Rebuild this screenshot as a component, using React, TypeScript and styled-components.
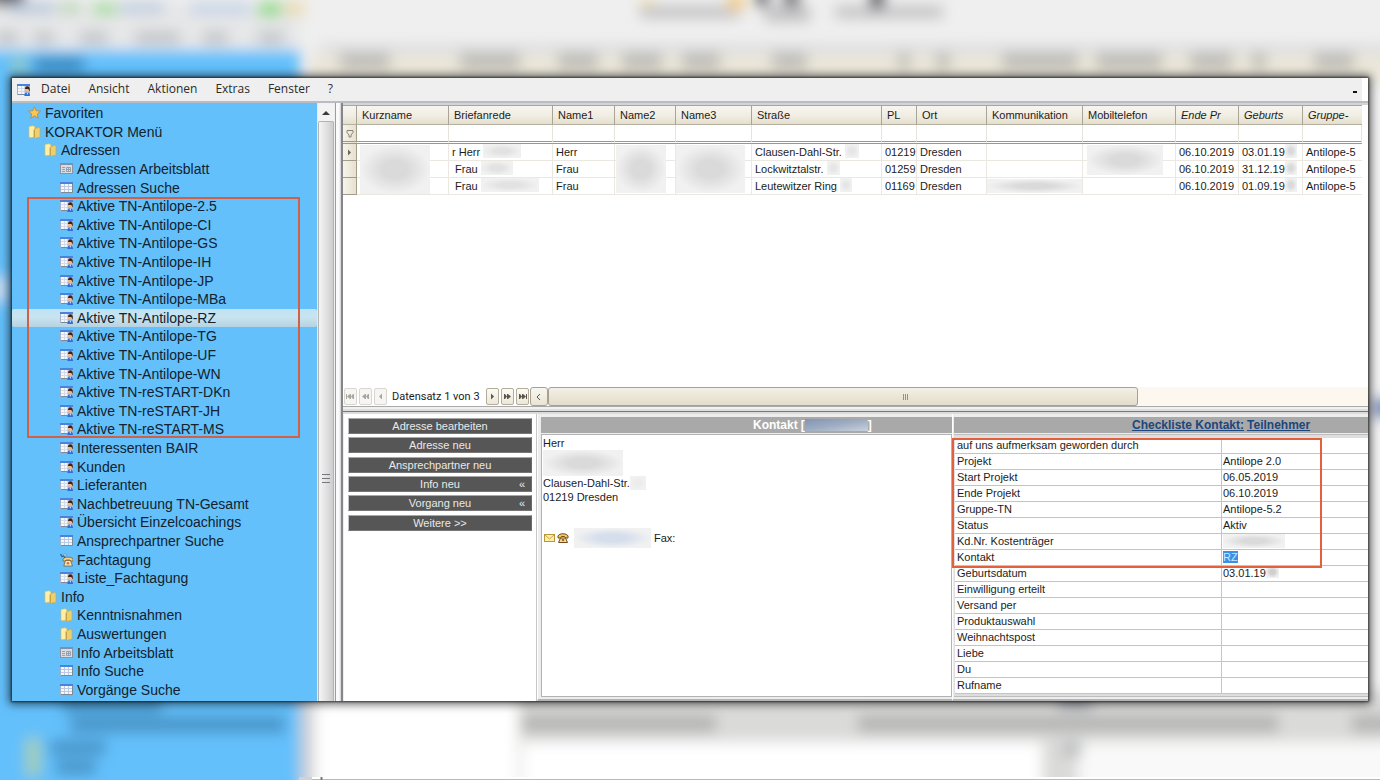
import React from "react";
import styled, { createGlobalStyle, css } from "styled-components";

const sans = `"Liberation Sans", Arial, sans-serif`;
const ui = `"Open Sans", "Noto Sans", sans-serif`;

const Global = createGlobalStyle`
  *, *::before, *::after { box-sizing: border-box; }
  body { margin: 0; background: #efefef; color: #1c1c1c; font-family: ${sans}; font-size: 11px; }
  button, input { font: inherit; color: inherit; margin: 0; padding: 0; border: 0; background: none; }
  table { border-collapse: separate; border-spacing: 0; }
  th { font-weight: normal; text-align: left; }
  ul { list-style: none; margin: 0; padding: 0; }
`;

/* ---------- page and window frame ---------- */

const Page = styled.div`
  position: relative;
  display: flex;
  min-height: 100vh;
  padding: 78px 12px 79px;
  overflow: hidden;
`;

const BackdropArt = styled.svg`
  position: absolute;
  inset: 0;
  width: 100%;
  height: 100%;
`;

const Window = styled.div`
  position: relative;
  flex: 1;
  min-width: 0;
  display: flex;
  flex-direction: column;
  background: #efefef;
  box-shadow: 0 0 2px 1px rgba(0, 0, 0, 0.6), 0 0 9px 3px rgba(0, 0, 0, 0.6);
`;

const MenuBar = styled.nav`
  display: flex;
  align-items: center;
  height: 23px;
  padding: 0 5px;
  font-family: ${ui};
  font-size: 12px;
  line-height: 20px;
  color: #2b2b2b;
  border-right: 6px solid #fff;
`;

const MenuItem = styled.button`
  height: 22px;
  padding-bottom: 2px;
  margin-left: 18px;
  &:first-of-type { margin-left: 11px; }
`;

const Overflow = styled.span`
  width: 4px;
  height: 2px;
  margin: 4px 0 0 auto;
  background: #111;
`;

const Workspace = styled.div`
  flex: 1;
  display: flex;
  min-height: 0;
  border-top: 2px solid #b9bcc0;
`;

/* ---------- tree ---------- */

const Tree = styled.ul`
  position: relative;
  flex: none;
  width: 305px;
  display: grid;
  grid-template-rows: repeat(32, minmax(18px, 1fr));
  padding: 1px 0 2px;
  background: #63c0fb;
  font-size: 14px;
`;

const TreeRow = styled.li<{ $level: number; $active?: boolean }>`
  display: flex;
  padding-left: ${(p) => 16 + p.$level * 16}px;
  ${(p) =>
    p.$active &&
    css`
      background: linear-gradient(#bfe2f4, #c9e4f0 45%, #b5d3e3);
      border-radius: 2px;
    `}
`;

const TreeLink = styled.a`
  display: flex;
  align-items: center;
  gap: 4px;
  color: #12222e;
  text-decoration: none;
  white-space: nowrap;
  line-height: 18px;
`;

const TreeMark = styled.li`
  position: absolute;
  grid-row: 6 / 19;
  inset: 0 17px 1px 15px;
  border: 2px solid #cf6148;
  pointer-events: none;
`;

const VScroll = styled.div`
  flex: none;
  width: 18px;
  display: flex;
  flex-direction: column;
  padding: 1px 1px 0;
  background: linear-gradient(90deg, #d8ecf8, #f2f2f2 20%, #efefef);
`;

const VScrollUp = styled.button`
  height: 17px;
  display: grid;
  place-items: center;
  background: #f3f3f3;
`;

const VScrollThumb = styled.div`
  flex: 1;
  display: grid;
  place-items: center;
  padding-top: 134px;
  border: 1px solid #b4b4b4;
  border-bottom: 0;
  border-radius: 2px 2px 0 0;
  background: linear-gradient(90deg, #f5f5f5, #e4e4e4 45%, #cdcdd0);
`;

const Divider = styled.div`
  flex: none;
  width: 8px;
  border-left: 1px solid #5fb0e0;
  border-right: 2px solid #85858a;
  background: linear-gradient(90deg, #fafafa 60%, #cfcfd2);
`;

/* ---------- address grid ---------- */

const Main = styled.main`
  flex: 1;
  min-width: 0;
  display: flex;
  flex-direction: column;
  background: #fff;
`;

const GridPane = styled.section`
  flex: 1;
  padding-right: 6px;
  border-top: 2px solid #d4d4d6;
  overflow: hidden;
`;

const AddressTable = styled.table`
  width: 100%;
  table-layout: fixed;
`;

const HeadCell = styled.th<{ $italic?: boolean }>`
  height: 20px;
  padding: 0 0 0 5px;
  white-space: nowrap;
  overflow: hidden;
  font-style: ${(p) => (p.$italic ? "italic" : "normal")};
  background: linear-gradient(#f7f5f0, #f0ede3 55%, #e4dfcd);
  border-right: 1px solid #a9a496;
  border-bottom: 1px solid #b6b0a0;
  border-top: 1px solid #a5a5a5;
  &:last-child { border-right: 0; }
`;

const FilterCell = styled.td`
  height: 19px;
  padding: 0;
  background: #fff;
  border-right: 1px solid #e6e3dc;
  border-bottom: 3px double #a89674;
`;

const FilterInput = styled.input`
  display: block;
  width: 100%;
  height: 15px;
  padding: 0 3px;
  outline: 0;
`;

const MarkerCell = styled.td<{ $tall?: boolean }>`
  height: ${(p) => (p.$tall ? 19 : 17)}px;
  padding: 0;
  line-height: 0;
  text-align: center;
  background: linear-gradient(90deg, #f6f3ea, #e6e1d0);
  border-right: 1px solid #a39c88;
  border-bottom: ${(p) => (p.$tall ? "3px double #a89674" : "1px solid #a39c88")};
`;

const Cell = styled.td`
  position: relative;
  height: 17px;
  padding: 0 0 0 3px;
  line-height: 16px;
  white-space: nowrap;
  border-right: 1px solid #ebe8e1;
  border-bottom: 1px solid #ebe8e1;
  &:last-child { border-right: 0; }
`;

/* Grey haze that hides personal data. */
const Haze = styled.span<{ $w: number; $h: number; $tone?: string }>`
  display: inline-block;
  vertical-align: top;
  width: ${(p) => p.$w}px;
  height: ${(p) => p.$h}px;
  background: radial-gradient(farthest-side, ${(p) => p.$tone ?? "#dadada"} 35%, #f1f1f1);
`;

const HazeOver = styled(Haze)<{ $x: number }>`
  position: absolute;
  z-index: 1;
  left: ${(p) => p.$x}px;
  top: 1px;
`;

/* ---------- record navigator ---------- */

const Navigator = styled.div`
  display: flex;
  align-items: stretch;
  height: 20px;
  border-bottom: 1px solid #a9a9a9;
`;

const NavGroup = styled.div`
  display: flex;
  align-items: center;
  gap: 2px;
  padding: 0 1px;
`;

const NavButton = styled.button`
  width: 13px;
  height: 17px;
  display: grid;
  place-items: center;
  color: #5d564a;
  border: 1px solid #b5ad9a;
  border-radius: 2px;
  background: linear-gradient(#fbfaf6, #ece7d9);
  &:disabled { color: #a9a7a2; border-color: #d8d6d0; background: #f6f5f2; }
`;

const NavText = styled.span`
  padding: 0 4px 0 3px;
  font-family: Roboto, sans-serif;
  line-height: 16px;
  white-space: nowrap;
`;

const ScrollLeft = styled.button`
  width: 18px;
  display: grid;
  place-items: center;
  color: #5d564a;
  border: 1px solid #a8a191;
  border-radius: 3px;
  background: linear-gradient(#f8f6f0, #e9e4d4);
`;

const HTrack = styled.div`
  flex: 1;
  background: #fcf8ef;
`;

const HThumb = styled.div`
  width: 72%;
  height: 19px;
  display: grid;
  place-items: center;
  padding-left: 126px;
  border: 1px solid #a8a191;
  border-radius: 3px;
  background: linear-gradient(#f3f0e8, #e9e4d3 60%, #e3decb);
`;

const Splitter = styled.div`
  height: 7px;
  border-bottom: 2px solid #dcdcdc;
  background: linear-gradient(#f1f1f1 0 2px, #dedede 2px 4px, #77777b 4px 5px);
`;

/* ---------- lower panels ---------- */

const Lower = styled.div`
  display: flex;
  background: #ededed;
`;

const ActionPanel = styled.section`
  flex: none;
  width: 193px;
  display: flex;
  flex-direction: column;
  gap: 4px;
  margin-left: 1px;
  padding: 4px 4px 0;
  background: #fff;
  border-right: 1px solid #c6c6c6;
`;

const ActionGroup = styled.div`
  display: flex;
  flex-direction: column;
  gap: 3px;
`;

const ActionButton = styled.button`
  position: relative;
  height: 16px;
  line-height: 14px;
  color: #e9e9e9;
  background: #565656;
  border: 1px solid;
  border-color: #a8a8a8 #6b6b6b #777 #c4c4c4;
`;

const More = styled.span`
  position: absolute;
  right: 6px;
  top: 0;
`;

const Panel = styled.section<{ $width?: number }>`
  flex: ${(p) => (p.$width ? `0 0 ${p.$width}px` : "1")};
  min-width: 0;
  display: flex;
  flex-direction: column;
  padding: 3px 0 0 ${(p) => (p.$width ? 3 : 1)}px;
  border-left: 1px solid #fff;
  border-bottom: 2px solid #b4b4b6;
`;

const PanelHead = styled.h2<{ $indent: number }>`
  display: flex;
  align-items: center;
  gap: 3px;
  height: 16px;
  margin: 0;
  padding-left: ${(p) => p.$indent}px;
  font-size: 12px;
  line-height: 16px;
  white-space: nowrap;
  color: #fff;
  background: #aaa9aa;
  a { color: #1c467c; }
`;

const NameTag = styled.span`
  display: flex;
  align-items: center;
`;

const NamePatch = styled.span`
  width: 63px;
  height: 12px;
  background: linear-gradient(170deg, #8294b6, #9fadc2 50%, #c8d2dc);
`;

const ContactCard = styled.address`
  flex: 1;
  margin: 1px 0 2px;
  padding: 1px;
  font-style: normal;
  line-height: 14px;
  background: #fff;
  border: 1px solid #b3b3b3;
`;

const CardLine = styled.div<{ $gap?: number }>`
  display: flex;
  align-items: center;
  column-gap: ${(p) => (p.$gap ? 3 : 0)}px;
  margin-top: ${(p) => p.$gap ?? 0}px;
`;

const Checklist = styled.div`
  position: relative;
  margin: 1px 0 2px;
  padding: 3px 0 2px 1px;
  background: #dedede;
  border-top: 1px solid #bdbdbd;
  border-bottom: 1px solid #bdbdbd;
`;

const CheckTable = styled.table`
  width: 100%;
  table-layout: fixed;
  background: #fff;
  th, td {
    height: 16px;
    padding: 0 0 0 2px;
    line-height: 15px;
    white-space: nowrap;
    border-bottom: 1px solid #c4c4c4;
  }
  th { width: 267px; border-right: 1px solid #c4c4c4; }
  td { padding-left: 1px; }
  mark { color: #cfe6ff; background: #3b92e4; }
`;

const ChecklistMark = styled.div`
  position: absolute;
  inset: 3px 46px 128px -2px;
  border: 2px solid #e4603c;
  pointer-events: none;
`;

/* ---------- icons ---------- */

type IconKind = "star" | "folder" | "sheet" | "table" | "contact" | "phone";

const Grid = ({ line = "#bccbe2" }: { line?: string }) => (
  <>
    <rect x=".5" y="1.500" width="12" height="10" fill="#f4f8fe" stroke="#a5b1c6" />
    <path d="M12.500 3v8.500H1" fill="none" stroke="#7d8898" />
    <rect x="0" y="1" width="13" height="2" fill="#4a83de" />
    <path d="M1 5.500h11M1 8.500h11M4.500 3v8M8.500 3v8" stroke={line} />
  </>
);

const Icon = ({ kind }: { kind: IconKind }) => (
  <svg width="13" height="14" viewBox="0 0 13 14" aria-hidden="true">
    {kind === "star" && (
      <path d="M6.500 .8l1.700 3.900 4.300.4-3.200 2.900 1 4.200-3.800-2.300-3.800 2.300 1-4.200L.5 5.100l4.300-.4z" fill="#fbc552" stroke="#b98535" strokeWidth=".8" />
    )}
    {kind === "folder" && (
      <>
        <path d="M1 1.500l4-.8 2 1.300V12l-5 .8-1-1z" fill="#ffefa6" stroke="#dcb858" strokeWidth=".6" />
        <path d="M6 4.200l4.500-2 1.500.8v9.200L7.200 13.200 6 12.500z" fill="#edcf6c" stroke="#c9a548" strokeWidth=".6" />
        <path d="M6.300 5v7.300" stroke="#b18f3c" strokeWidth=".8" />
      </>
    )}
    {kind === "table" && <Grid />}
    {kind === "sheet" && (
      <>
        <rect x=".5" y="1.500" width="12" height="10" fill="#d9dde3" stroke="#8b93a0" />
        <rect x="0" y="1" width="13" height="2" fill="#7d90ad" />
        <path d="M2 5.500h3M2 7.500h3M2 9.500h3M6.500 5.500h4v4h-4zM8.500 5v5M7 7.500h4" stroke="#979fab" fill="none" />
      </>
    )}
    {kind === "contact" && (
      <>
        <Grid line="#d3dcea" />
        <rect x="7.500" y="3" width="5.500" height="9" fill="#a9b8d2" />
        <circle cx="10.200" cy="6.800" r="2.200" fill="#f0b988" />
        <path d="M8 6c0-3.600 4.800-3.600 4.800 0v2.500l-1.500-2.500z" fill="#3c2418" />
        <path d="M7.300 13c0-5 5.700-5 5.700 0z" fill="#2f6fdd" />
        <path d="M9.500 9.500h1.500l-.7 2.500z" fill="#fff" />
      </>
    )}
    {kind === "phone" && (
      <>
        <path d="M.5 1l1.500 2.500L4 3l1 2" stroke="#2d5f86" strokeWidth="1.200" fill="none" />
        <circle cx="5" cy="2" r="1.200" fill="#e8f4ff" stroke="#3b7aa8" strokeWidth=".6" />
        <path d="M3 6c2-2.500 8-2.500 10 0v2h-2l-1-1H6L5 8H3z" fill="#f5d186" stroke="#7a5125" strokeWidth=".7" />
        <path d="M5.500 7.500h5L12.500 13H3.800z" fill="#fbe3ae" stroke="#7a5125" strokeWidth=".7" />
        <circle cx="8" cy="10.200" r="1.300" fill="#c8793c" />
      </>
    )}
  </svg>
);

const Arrow = ({ bars, count, flip }: { bars?: boolean; count: number; flip?: boolean }) => (
  <svg width="9" height="7" viewBox="0 0 9 7" aria-hidden="true">
    <g fill="currentColor" transform={flip ? "matrix(-1 0 0 1 9 0)" : undefined}>
      {count === 1 ? (
        <path d="M3 .5l3 3-3 3z" />
      ) : (
        <>
          <path d="M1 1h1l2 2.500L2 6H1zM4 1h1l3 2.500L5 6H4z" />
          {bars && <path d="M8 1h1v5H8z" />}
        </>
      )}
    </g>
  </svg>
);

const headerSmudges = [
  [340, 50], [460, 60], [558, 40], [622, 40], [682, 38], [772, 35], [898, 12],
  [936, 14], [1002, 76], [1096, 66], [1190, 42], [1252, 14], [1314, 40],
];

const Backdrop = () => (
  <BackdropArt viewBox="0 0 1380 780" preserveAspectRatio="none" aria-hidden="true">
    <defs>
      <filter id="soft" x="-10%" y="-10%" width="120%" height="120%">
        <feGaussianBlur stdDeviation="7" />
      </filter>
    </defs>
    <rect width="1380" height="780" fill="#efefef" />
    <g filter="url(#soft)">
      <rect x="-30" y="2" width="330" height="46" fill="#e6e7e8" />
      <g fill="#bdbfc3">
        <rect x="-10" y="-16" width="34" height="22" fill="#5c5c60" />
        <rect x="10" y="3" width="45" height="10" fill="#b2c2da" />
        <rect x="60" y="3" width="20" height="10" fill="#b5d4b0" />
        <rect x="93" y="3" width="24" height="12" fill="#a4dd9c" />
        <rect x="120" y="3" width="44" height="10" fill="#b9c9df" />
        <rect x="190" y="3" width="60" height="11" fill="#c4d3e8" />
        <rect x="258" y="2" width="24" height="15" fill="#94da8c" />
        <rect x="286" y="2" width="18" height="13" fill="#ead9a8" />
        <rect x="-4" y="32" width="22" height="11" />
        <rect x="34" y="32" width="20" height="11" />
        <rect x="80" y="32" width="28" height="11" />
        <rect x="135" y="32" width="45" height="11" />
        <rect x="203" y="32" width="25" height="11" />
        <rect x="258" y="32" width="26" height="11" />
      </g>
      <g fill="#c2c2c4">
        <rect x="640" y="6" width="100" height="12" />
        <rect x="640" y="-2" width="14" height="8" fill="#f6e3b0" />
        <rect x="728" y="-8" width="16" height="18" fill="#f3cf8a" />
        <rect x="756" y="-10" width="13" height="16" fill="#606064" />
        <rect x="784" y="-10" width="15" height="20" fill="#606064" />
        <rect x="765" y="6" width="45" height="16" />
        <rect x="835" y="6" width="108" height="12" />
        <rect x="870" y="-10" width="14" height="18" fill="#505054" />
      </g>
      <rect x="320" y="44" width="1080" height="10" fill="#dcdddf" />
      <rect x="310" y="55" width="1090" height="25" fill="#ebe6d8" />
      <g fill="#bfbdb6">
        {headerSmudges.map(([x, w]) => (
          <rect key={x} x={x} y="53" width={w} height="17" />
        ))}
      </g>
      <rect x="-30" y="50" width="330" height="780" fill="#63c0fb" />
      <rect x="12" y="56" width="14" height="20" fill="#8cc8c4" />
      <rect x="34" y="56" width="50" height="17" fill="#3b8dc4" />
      <ellipse cx="-1" cy="289" rx="8" ry="14" fill="#d8e0ea" />
      <rect x="300" y="690" width="14" height="110" fill="#cfd2d6" />
      <rect x="316" y="690" width="202" height="110" fill="#fff" />
      <rect x="518" y="690" width="900" height="110" fill="#dadad9" />
      <rect x="522" y="715" width="194" height="17" fill="#b4b4b3" />
      <rect x="858" y="715" width="420" height="17" fill="#b4b4b3" />
      <rect x="1352" y="715" width="60" height="17" fill="#b4b4b3" />
      <rect x="522" y="742" width="520" height="60" fill="#fff" />
      <rect x="1078" y="742" width="340" height="60" fill="#f9f9f9" />
      <rect x="1058" y="695" width="34" height="14" fill="#a5a7b0" />
      <rect x="1062" y="742" width="20" height="14" fill="#bcbdc0" />
      <rect x="1366" y="90" width="40" height="600" fill="#f4f4f5" />
      <rect x="1372" y="398" width="30" height="20" fill="#5f7fb6" />
      <rect x="62" y="696" width="100" height="16" fill="#4895c8" />
      <rect x="70" y="716" width="215" height="17" fill="#4895c8" />
      <rect x="50" y="740" width="56" height="15" fill="#4895c8" />
      <rect x="56" y="760" width="40" height="15" fill="#4895c8" />
      <rect x="26" y="738" width="14" height="38" fill="#a6cfae" />
    </g>
    <rect x="312" y="777" width="1068" height="3" fill="#fff" />
    <path d="M312 779.500h1068" stroke="#b9b9b9" />
    <rect x="299" y="777" width="13" height="3" fill="#d2d2d4" />
    <path d="M321.500 777v3" stroke="#77777b" strokeWidth="2" />
  </BackdropArt>
);

/* ---------- data ---------- */

const tree: [number, IconKind, string][] = [
  [0, "star", "Favoriten"],
  [0, "folder", "KORAKTOR Menü"],
  [1, "folder", "Adressen"],
  [2, "sheet", "Adressen Arbeitsblatt"],
  [2, "table", "Adressen Suche"],
  [2, "contact", "Aktive TN-Antilope-2.5"],
  [2, "contact", "Aktive TN-Antilope-CI"],
  [2, "contact", "Aktive TN-Antilope-GS"],
  [2, "contact", "Aktive TN-Antilope-IH"],
  [2, "contact", "Aktive TN-Antilope-JP"],
  [2, "contact", "Aktive TN-Antilope-MBa"],
  [2, "contact", "Aktive TN-Antilope-RZ"],
  [2, "contact", "Aktive TN-Antilope-TG"],
  [2, "contact", "Aktive TN-Antilope-UF"],
  [2, "contact", "Aktive TN-Antilope-WN"],
  [2, "contact", "Aktive TN-reSTART-DKn"],
  [2, "contact", "Aktive TN-reSTART-JH"],
  [2, "contact", "Aktive TN-reSTART-MS"],
  [2, "contact", "Interessenten BAIR"],
  [2, "contact", "Kunden"],
  [2, "contact", "Lieferanten"],
  [2, "contact", "Nachbetreuung TN-Gesamt"],
  [2, "contact", "Übersicht Einzelcoachings"],
  [2, "table", "Ansprechpartner Suche"],
  [2, "phone", "Fachtagung"],
  [2, "contact", "Liste_Fachtagung"],
  [1, "folder", "Info"],
  [2, "folder", "Kenntnisnahmen"],
  [2, "folder", "Auswertungen"],
  [2, "sheet", "Info Arbeitsblatt"],
  [2, "table", "Info Suche"],
  [2, "table", "Vorgänge Suche"],
];

const columns: [string, number | undefined, boolean?][] = [
  ["Kurzname", 92],
  ["Briefanrede", 104],
  ["Name1", 62],
  ["Name2", 61],
  ["Name3", 76],
  ["Straße", 130],
  ["PL", 35],
  ["Ort", 70],
  ["Kommunikation", 96],
  ["Mobiltelefon", 93],
  ["Ende Pr", 63, true],
  ["Geburts", 64, true],
  ["Gruppe-", undefined, true],
];

const people = [
  { greet: "r Herr", greetHaze: 38, name: "Herr", street: "Clausen-Dahl-Str.", streetHaze: 14, zip: "01219", born: "03.01.19" },
  { greet: "\u00a0Frau", greetHaze: 32, name: "Frau", street: "Lockwitztalstr.", streetHaze: 13, zip: "01259", born: "31.12.19" },
  { greet: "\u00a0Frau", greetHaze: 58, name: "Frau", street: "Leutewitzer Ring", streetHaze: 12, zip: "01169", born: "01.09.19" },
];

const checks: [string, React.ReactNode][] = [
  ["auf uns aufmerksam geworden durch", ""],
  ["Projekt", "Antilope 2.0"],
  ["Start Projekt", "06.05.2019"],
  ["Ende Projekt", "06.10.2019"],
  ["Gruppe-TN", "Antilope-5.2"],
  ["Status", "Aktiv"],
  ["Kd.Nr. Kostenträger", <Haze key="h" $w={62} $h={14} />],
  ["Kontakt", <mark key="m">RZ</mark>],
  ["Geburtsdatum", <React.Fragment key="g">03.01.19<Haze $w={13} $h={12} $tone="#cfcfcf" /></React.Fragment>],
  ["Einwilligung erteilt", ""],
  ["Versand per", ""],
  ["Produktauswahl", ""],
  ["Weihnachtspost", ""],
  ["Liebe", ""],
  ["Du", ""],
  ["Rufname", ""],
];

const actionGroups: { label: string; more?: boolean }[][] = [
  [{ label: "Adresse bearbeiten" }, { label: "Adresse neu" }],
  [{ label: "Ansprechpartner neu" }, { label: "Info neu", more: true }, { label: "Vorgang neu", more: true }],
  [{ label: "Weitere >>" }],
];

/* ---------- app ---------- */

export default function App() {
  return (
    <>
      <Global />
      <Page>
        <Backdrop />
        <Window>
          <MenuBar>
            <Icon kind="contact" />
            {["Datei", "Ansicht", "Aktionen", "Extras", "Fenster", "?"].map((m) => (
              <MenuItem key={m}>{m}</MenuItem>
            ))}
            <Overflow />
          </MenuBar>
          <Workspace>
            <Tree>
              {tree.map(([level, kind, label]) => (
                <TreeRow key={label} $level={level} $active={label === "Aktive TN-Antilope-RZ"}>
                  <TreeLink href="#">
                    <Icon kind={kind} />
                    {label}
                  </TreeLink>
                </TreeRow>
              ))}
              <TreeMark aria-hidden="true" />
            </Tree>
            <VScroll>
              <VScrollUp aria-label="Nach oben">
                <svg width="8" height="4" viewBox="0 0 8 4" aria-hidden="true">
                  <path d="M0 4l4-4 4 4z" fill="#3c3c3c" />
                </svg>
              </VScrollUp>
              <VScrollThumb>
                <svg width="8" height="9" viewBox="0 0 8 9" aria-hidden="true">
                  <path d="M0 .5h8M0 4.500h8M0 8.500h8" stroke="#77777a" />
                </svg>
              </VScrollThumb>
            </VScroll>
            <Divider />
            <Main>
              <GridPane>
                <AddressTable>
                  <colgroup>
                    <col width={14} />
                    {columns.map(([name, width]) => (
                      <col key={name} width={width} />
                    ))}
                  </colgroup>
                  <thead>
                    <tr>
                      <HeadCell aria-label="Markierung" />
                      {columns.map(([name, , italic]) => (
                        <HeadCell key={name} scope="col" $italic={italic}>
                          {name}
                        </HeadCell>
                      ))}
                    </tr>
                  </thead>
                  <tbody>
                    <tr>
                      <MarkerCell $tall>
                        <svg width="8" height="9" viewBox="0 0 8 9" aria-hidden="true">
                          <path d="M1 1.500h6v2L5 6v2H3V6L1 3.500z" fill="none" stroke="#8c8473" />
                        </svg>
                      </MarkerCell>
                      {columns.map(([name]) => (
                        <FilterCell key={name}>
                          <FilterInput aria-label={`Filter ${name}`} />
                        </FilterCell>
                      ))}
                    </tr>
                    {people.map((p, i) => (
                      <tr key={p.zip}>
                        <MarkerCell>
                          {i === 0 && (
                            <svg width="5" height="7" viewBox="0 0 5 7" aria-hidden="true">
                              <path d="M1 .5l3 3-3 3z" fill="#6d6555" />
                            </svg>
                          )}
                        </MarkerCell>
                        <Cell>{i === 0 && <HazeOver $x={3} $w={70} $h={49} />}</Cell>
                        <Cell>
                          {p.greet} <Haze $w={p.greetHaze} $h={14} $tone="#e2e2e2" />
                        </Cell>
                        <Cell>{p.name}</Cell>
                        <Cell>{i === 0 && <HazeOver $x={1} $w={50} $h={48} />}</Cell>
                        <Cell>{i === 0 && <HazeOver $x={0} $w={69} $h={48} />}</Cell>
                        <Cell>
                          {p.street} <Haze $w={p.streetHaze} $h={14} $tone="#e6e6e6" />
                        </Cell>
                        <Cell>{p.zip}</Cell>
                        <Cell>Dresden</Cell>
                        <Cell>{i === 2 && <HazeOver $x={0} $w={95} $h={14} />}</Cell>
                        <Cell>{i === 0 && <HazeOver $x={4} $w={76} $h={30} />}</Cell>
                        <Cell>06.10.2019</Cell>
                        <Cell>
                          {p.born}
                          <Haze $w={12} $h={14} />
                        </Cell>
                        <Cell>Antilope-5</Cell>
                      </tr>
                    ))}
                  </tbody>
                </AddressTable>
              </GridPane>

              <Navigator>
                <NavGroup>
                  <NavButton disabled aria-label="Erster"><Arrow count={2} bars flip /></NavButton>
                  <NavButton disabled aria-label="Seite zurück"><Arrow count={2} flip /></NavButton>
                  <NavButton disabled aria-label="Zurück"><Arrow count={1} flip /></NavButton>
                  <NavText>Datensatz 1 von 3</NavText>
                  <NavButton aria-label="Weiter"><Arrow count={1} /></NavButton>
                  <NavButton aria-label="Seite weiter"><Arrow count={2} /></NavButton>
                  <NavButton aria-label="Letzter"><Arrow count={2} bars /></NavButton>
                </NavGroup>
                <ScrollLeft aria-label="Nach links">
                  <svg width="5" height="8" viewBox="0 0 5 8" aria-hidden="true">
                    <path d="M4 1L1 4l3 3" fill="none" stroke="currentColor" />
                  </svg>
                </ScrollLeft>
                <HTrack>
                  <HThumb>
                    <svg width="5" height="6" viewBox="0 0 5 6" aria-hidden="true">
                      <path d="M.5 0v6M2.500 0v6M4.500 0v6" stroke="#97917f" />
                    </svg>
                  </HThumb>
                </HTrack>
              </Navigator>
              <Splitter />

              <Lower>
                <ActionPanel>
                  {actionGroups.map((group) => (
                    <ActionGroup key={group[0].label}>
                      {group.map((a) => (
                        <ActionButton key={a.label}>
                          {a.label}
                          {a.more && <More aria-hidden="true">«</More>}
                        </ActionButton>
                      ))}
                    </ActionGroup>
                  ))}
                </ActionPanel>
                <Panel $width={415}>
                  <PanelHead $indent={212}>
                    Kontakt
                    <NameTag>[<NamePatch />]</NameTag>
                  </PanelHead>
                  <ContactCard>
                    <CardLine>Herr</CardLine>
                    <CardLine><Haze $w={80} $h={26} /></CardLine>
                    <CardLine>Clausen-Dahl-Str. <Haze $w={16} $h={14} $tone="#ececec" /></CardLine>
                    <CardLine>01219 Dresden</CardLine>
                    <CardLine $gap={24}>
                      <svg width="28" height="12" viewBox="0 0 28 12" aria-hidden="true">
                        <rect x="1.500" y="2.500" width="10" height="7" fill="#fdf0a6" stroke="#b9963a" />
                        <path d="M2 3l4.500 4L11 3" fill="none" stroke="#c9a64a" />
                        <path d="M15 4c1-3 9-3 10 0v2h-2.500l-1-1.500h-3L17.500 6H15z" fill="#f3c95c" stroke="#6f4a1e" />
                        <path d="M17.500 6h5l2 4.500h-9z" fill="#fbe08c" stroke="#6f4a1e" />
                        <circle cx="20" cy="8" r="1.300" fill="#a8672a" />
                      </svg>
                      <Haze $w={77} $h={20} $tone="#d5deec" />
                      Fax:
                    </CardLine>
                  </ContactCard>
                </Panel>
                <Panel>
                  <PanelHead $indent={178}>
                    <a href="#">Checkliste Kontakt:</a> <a href="#">Teilnehmer</a>
                  </PanelHead>
                  <Checklist>
                    <CheckTable>
                      <tbody>
                        {checks.map(([label, value]) => (
                          <tr key={label}>
                            <th scope="row">{label}</th>
                            <td>{value}</td>
                          </tr>
                        ))}
                      </tbody>
                    </CheckTable>
                    <ChecklistMark aria-hidden="true" />
                  </Checklist>
                </Panel>
              </Lower>
            </Main>
          </Workspace>
        </Window>
      </Page>
    </>
  );
}
